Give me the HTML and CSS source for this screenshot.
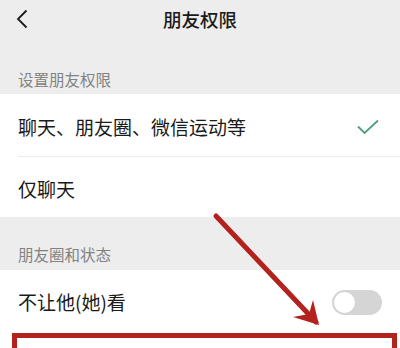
FILE: index.html
```html
<!DOCTYPE html>
<html lang="zh">
<head>
<meta charset="utf-8">
<link rel="stylesheet" href="styles.css">
</head>
<body>
<div class="page">
  <div class="header">
    <svg class="back" width="14" height="20" viewBox="0 0 14 20"><path d="M11.5 1.5 L3 10 L11.5 18.5" fill="none" stroke="#1a1a1a" stroke-width="1.8"/></svg>
    <div class="title">朋友权限</div>
  </div>
  <div class="section-label first">设置朋友权限</div>
  <div class="group">
    <div class="row row1">
      <span class="text">聊天、朋友圈、微信运动等</span>
      <svg class="check" width="24" height="16" viewBox="0 0 24 16"><path d="M2 7.5 L8.5 14 L22 1.5" fill="none" stroke="#4f9f79" stroke-width="1.8"/></svg>
    </div>
    <div class="row row2"><span class="text">仅聊天</span></div>
  </div>
  <div class="section-label second">朋友圈和状态</div>
  <div class="group">
    <div class="row row3">
      <span class="text">不让他(她)看</span>
      <div class="toggle"><div class="knob"></div></div>
    </div>
    <div class="row row4"><div class="highlight"></div></div>
  </div>
  <svg class="arrow" width="400" height="348" viewBox="0 0 400 348">
    <line x1="216" y1="216" x2="316" y2="322" stroke="#b3221c" stroke-width="5" stroke-linecap="round"/>
    <path d="M319 325 L313 300 L309 314 L293 317 Z" fill="#b3221c"/>
  </svg>
</div>
</body>
</html>
```
FILE: styles.css
```css
* { box-sizing: border-box; }
html, body { margin: 0; padding: 0; }
body {
  width: 400px;
  height: 348px;
  overflow: hidden;
  background: #ededed;
  font-family: "Noto Sans CJK SC", "Noto Sans", sans-serif;
  color: #1a1a1a;
}
.page { position: relative; width: 400px; height: 348px; overflow: hidden; }
.header {
  height: 38px;
  display: flex;
  align-items: center;
  justify-content: center;
  position: relative;
}
.back { position: absolute; left: 15px; top: 9px; }
.title { font-size: 18.5px; line-height: 38px; font-weight: 500; }
.section-label {
  font-size: 15.5px;
  color: #828282;
  padding-left: 18px;
}
.section-label.first { height: 56px; line-height: 20px; padding-top: 31px; }
.section-label.second { height: 53px; line-height: 20px; padding-top: 27px; }
.group { background: #fff; }
.row {
  display: flex;
  align-items: center;
  justify-content: space-between;
  padding: 0 18px;
  font-size: 19px;
  position: relative;
}
.row1 { height: 63px; padding-top: 2px; }
.row1::after {
  content: "";
  position: absolute;
  left: 18px; right: 0; bottom: 0;
  height: 1px;
  background: #ececec;
}
.row2 { height: 60px; padding-top: 4px; }
.row3 { height: 63px; }
.row4 { height: 15px; }
.text { line-height: 24px; }
.check { margin-right: 2px; }
.toggle {
  width: 50px;
  height: 25px;
  border-radius: 13px;
  background: #d5d5d5;
  position: relative;
  margin-top: 1px;
}
.knob {
  position: absolute;
  left: 1px; top: 1px;
  width: 23px; height: 23px;
  border-radius: 50%;
  background: #fff;
  border: 1px solid #cfcfcf;
}
.highlight {
  position: absolute;
  left: 12px; right: 3px; top: 0; bottom: 0;
  border: 5px solid #b3221c;
  border-bottom: none;
}
.arrow { position: absolute; left: 0; top: 0; pointer-events: none; }
```
